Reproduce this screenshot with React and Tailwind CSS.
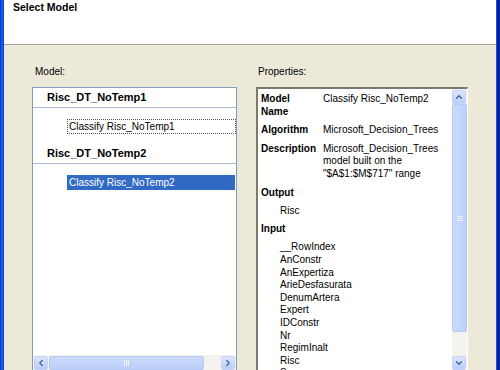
import { ChevronUp, ChevronDown, ChevronLeft, ChevronRight } from 'lucide-react'

const inputs = [
  '__RowIndex', 'AnConstr', 'AnExpertiza', 'ArieDesfasurata', 'DenumArtera',
  'Expert', 'IDConstr', 'Nr', 'RegimInalt', 'Risc', 'Scor',
]

export default function App() {
  return (
    <div className="w-[500px] h-[370px] overflow-hidden flex bg-[#ece9d8] text-black" style={{ fontFamily: '"Liberation Sans", Arial, sans-serif' }}>
      {/* window frame left */}
      <div className="w-[4px] shrink-0 flex">
        <div className="w-[1px] bg-[#0a3cd0]" />
        <div className="w-[2px] bg-[#1458e6]" />
        <div className="w-[1px] bg-[#0c47d8]" />
      </div>

      <div className="flex-1 flex flex-col">
        {/* header */}
        <div className="h-[45px] shrink-0 bg-white border-b border-[#aca899] pl-[9px]">
          <div className="text-[10.5px] font-bold leading-[14px]">Select Model</div>
        </div>

        <div className="flex pl-[28px] pt-[21px] gap-[19px]">
          {/* models */}
          <div className="w-[205px] flex flex-col">
            <div className="text-[10px] leading-[12px] pl-[3px] mb-[9px]">Model:</div>
            <div className="h-[284px] border border-[#7f9db9] bg-white flex flex-col">
              <div className="flex-1">
                <Group title="Risc_DT_NoTemp1">
                  <div className="h-[15px] border border-dotted border-[#555] text-[10px] leading-[13px] px-[1px]">Classify Risc_NoTemp1</div>
                </Group>
                <Group title="Risc_DT_NoTemp2">
                  <div className="h-[15px] w-[168px] bg-[#316ac5] text-white text-[10px] leading-[15px] px-[2px]">Classify Risc_NoTemp2</div>
                </Group>
              </div>
              <div className="h-[15px] flex items-center bg-[#f4f3ee] px-[1px] gap-[1px]">
                <ArrowBtn><ChevronLeft size={10} strokeWidth={3} /></ArrowBtn>
                <div className="w-[155px] h-[14px] rounded-[2px] border border-[#b6c9f5] bg-gradient-to-b from-[#cddbfb] to-[#bccffa] flex items-center justify-center">
                  <div className="flex gap-[1px]">
                    <div className="w-[1px] h-[6px] bg-[#eef3ff]" />
                    <div className="w-[1px] h-[6px] bg-[#eef3ff]" />
                    <div className="w-[1px] h-[6px] bg-[#eef3ff]" />
                  </div>
                </div>
                <div className="flex-1" />
                <ArrowBtn><ChevronRight size={10} strokeWidth={3} /></ArrowBtn>
              </div>
            </div>
          </div>

          {/* properties */}
          <div className="w-[212px] flex flex-col">
            <div className="text-[10px] leading-[12px] pl-[2px] mb-[9px]">Properties:</div>
            <div className="h-[290px] border-t-2 border-l-2 border-[#7c7a70] border-r border-r-white bg-white flex">
              <div className="flex-1 pl-[3px] pt-[4px] text-[10px] leading-[12.6px] overflow-hidden">
                <Row label={<>Model<br />Name</>}>Classify Risc_NoTemp2</Row>
                <Row label="Algorithm">Microsoft_Decision_Trees</Row>
                <Row label="Description">
                  Microsoft_Decision_Trees<br />model built on the<br />"$A$1:$M$717" range
                </Row>
                <div className="font-bold mb-[5.5px]">Output</div>
                <div className="pl-[19px] mb-[5.5px]">Risc</div>
                <div className="font-bold mb-[6px]">Input</div>
                {inputs.map(i => (
                  <div key={i} className="pl-[19px]">{i}</div>
                ))}
              </div>
              <div className="w-[15px] flex flex-col bg-[#f4f3ee] pt-[1px]">
                <ArrowBtn><ChevronUp size={10} strokeWidth={3} /></ArrowBtn>
                <div className="h-[228px] rounded-[2px] border border-[#b6c9f5] bg-gradient-to-r from-[#cddbfb] to-[#bccffa] flex items-center justify-center">
                  <div className="flex flex-col gap-[1px]">
                    <div className="w-[6px] h-[1px] bg-[#eef3ff]" />
                    <div className="w-[6px] h-[1px] bg-[#eef3ff]" />
                    <div className="w-[6px] h-[1px] bg-[#eef3ff]" />
                  </div>
                </div>
                <div className="h-[24px]" />
                <ArrowBtn><ChevronDown size={10} strokeWidth={3} /></ArrowBtn>
              </div>
            </div>
          </div>
        </div>
      </div>

      {/* window frame right */}
      <div className="w-[4px] shrink-0 flex">
        <div className="w-[1px] bg-[#1d4fcf]" />
        <div className="w-[3px] bg-[#0021a6]" />
      </div>
    </div>
  )
}

function Group({ title, children }) {
  return (
    <div>
      <div className="h-[20px] border-b border-[#aab8d2] pl-[14px] text-[11px] font-bold leading-[19px]">{title}</div>
      <div className="pl-[34px] pt-[11px] pb-[10px]">{children}</div>
    </div>
  )
}

function Row({ label, children }) {
  return (
    <div className="flex mb-[6px]">
      <div className="w-[62px] shrink-0 font-bold">{label}</div>
      <div>{children}</div>
    </div>
  )
}

function ArrowBtn({ children }) {
  return (
    <div className="w-[14px] h-[14px] shrink-0 rounded-[2px] border border-[#c3d3fd] bg-gradient-to-b from-[#dbe6fe] to-[#b9cdfa] text-[#4d6185] flex items-center justify-center">
      {children}
    </div>
  )
}
